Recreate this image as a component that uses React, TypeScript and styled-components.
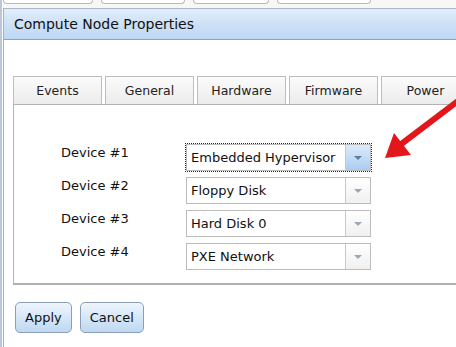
import React from "react";
import styled, { createGlobalStyle } from "styled-components";

const GlobalStyle = createGlobalStyle`
  html, body {
    margin: 0;
    padding: 0;
    background: #ffffff;
    overflow: hidden;
  }
  body {
    font-family: "DejaVu Sans", Verdana, sans-serif;
    color: #111111;
  }
`;

const Screen = styled.div`
  position: relative;
  width: 456px;
  height: 347px;
  overflow: hidden;
  background: linear-gradient(to right, #b9c8da 0, #b9c8da 2px, #ffffff 2px);
`;

const BrowserTabs = styled.div`
  display: flex;
  gap: 8px;
  height: 8px;
  margin-left: 3px;
  background: #f7f7f7;
`;

const BrowserTab = styled.div<{ $w: number }>`
  width: ${(p) => p.$w}px;
  height: 3px;
  background: #ffffff;
  border: 1px solid #b9b9b9;
  border-top: none;
  border-radius: 0 0 6px 6px;
`;

const Window = styled.div`
  margin-left: 3px;
  width: 520px;
  height: 339px;
  border-left: 1px solid #a3b0c0;
  border-top: 1px solid #a9b7c8;
  background: #ffffff;
`;

const TitleBar = styled.div`
  display: flex;
  align-items: center;
  height: 30px;
  padding-left: 10px;
  background: linear-gradient(#e2eefb, #cfe2f7 45%, #bed8f4);
  border-bottom: 1px solid #8ea3ba;
  font-size: 14px;
  color: #111111;
`;

const Body = styled.div`
  padding: 36px 0 0 9px;
`;

const TabBar = styled.div`
  display: flex;
  gap: 3px;
`;

const Tab = styled.div`
  box-sizing: border-box;
  width: 89px;
  height: 28px;
  flex: none;
  display: flex;
  align-items: center;
  justify-content: center;
  font-size: 12.5px;
  color: #222222;
  background: linear-gradient(#fbfbfb, #ececec);
  border: 1px solid #bdbdbd;
  border-bottom: none;
`;

const Panel = styled.div`
  box-sizing: border-box;
  height: 181px;
  border: 1px solid #b3b3b3;
  border-bottom: 2px solid #b0b0b0;
  padding: 39px 0 0 47px;
`;

const DeviceGrid = styled.div`
  display: grid;
  grid-template-columns: 125px 185px;
  row-gap: 6px;
  align-items: start;
`;

const Label = styled.div`
  font-size: 13px;
  line-height: 15px;
  padding-top: 1px;
  color: #111111;
`;

const Select = styled.div<{ $focused?: boolean }>`
  box-sizing: border-box;
  height: 27px;
  display: flex;
  align-items: stretch;
  background: #ffffff;
  border: 1px solid #bcbcbc;
  outline: ${(p) => (p.$focused ? "1px dotted #2a2a2a" : "none")};
  outline-offset: 0;
`;

const SelectText = styled.div`
  flex: 1;
  display: flex;
  align-items: center;
  padding-left: 4px;
  font-size: 13px;
  color: #111111;
`;

const SelectButton = styled.div<{ $focused?: boolean }>`
  width: 24px;
  display: flex;
  align-items: center;
  justify-content: center;
  border-left: 1px solid #c8c8c8;
  background: ${(p) =>
    p.$focused
      ? "linear-gradient(#dcebfb, #a9cdf1)"
      : "linear-gradient(#ffffff, #f0f0f0)"};

  &::after {
    content: "";
    width: 0;
    height: 0;
    border-left: 4px solid transparent;
    border-right: 4px solid transparent;
    border-top: 4px solid ${(p) => (p.$focused ? "#5b7da3" : "#9aa8b8")};
  }
`;

const ButtonRow = styled.div`
  display: flex;
  gap: 8px;
  margin: 17px 0 0 2px;
`;

const Button = styled.button`
  box-sizing: border-box;
  height: 31px;
  padding: 0 9px;
  font-family: "DejaVu Sans", Verdana, sans-serif;
  font-size: 13px;
  color: #111111;
  background: linear-gradient(#eef5fd, #d6e7f8 50%, #bfd8f1);
  border: 1px solid #8c9fb6;
  border-radius: 5px;
`;

const Arrow = styled.svg`
  position: absolute;
  left: 0;
  top: 0;
  pointer-events: none;
`;

const devices = [
  { label: "Device #1", value: "Embedded Hypervisor", focused: true },
  { label: "Device #2", value: "Floppy Disk" },
  { label: "Device #3", value: "Hard Disk 0" },
  { label: "Device #4", value: "PXE Network" },
];

const tabs = ["Events", "General", "Hardware", "Firmware", "Power"];

export default function App() {
  return (
    <Screen>
      <GlobalStyle />
      <BrowserTabs>
        <BrowserTab $w={88} />
        <BrowserTab $w={82} />
        <BrowserTab $w={74} />
        <BrowserTab $w={92} />
      </BrowserTabs>
      <Window>
        <TitleBar>Compute Node Properties</TitleBar>
        <Body>
          <TabBar>
            {tabs.map((t) => (
              <Tab key={t}>{t}</Tab>
            ))}
          </TabBar>
          <Panel>
            <DeviceGrid>
              {devices.map((d) => (
                <React.Fragment key={d.label}>
                  <Label>{d.label}</Label>
                  <Select $focused={d.focused}>
                    <SelectText>{d.value}</SelectText>
                    <SelectButton $focused={d.focused} />
                  </Select>
                </React.Fragment>
              ))}
            </DeviceGrid>
          </Panel>
          <ButtonRow>
            <Button>Apply</Button>
            <Button>Cancel</Button>
          </ButtonRow>
        </Body>
      </Window>
      <Arrow width="456" height="347" viewBox="0 0 456 347">
        <line x1="470" y1="92" x2="400" y2="145" stroke="#e3161b" strokeWidth="6" strokeLinecap="round" />
        <polygon points="385,158 394,133 411,155" fill="#e3161b" />
      </Arrow>
    </Screen>
  );
}
